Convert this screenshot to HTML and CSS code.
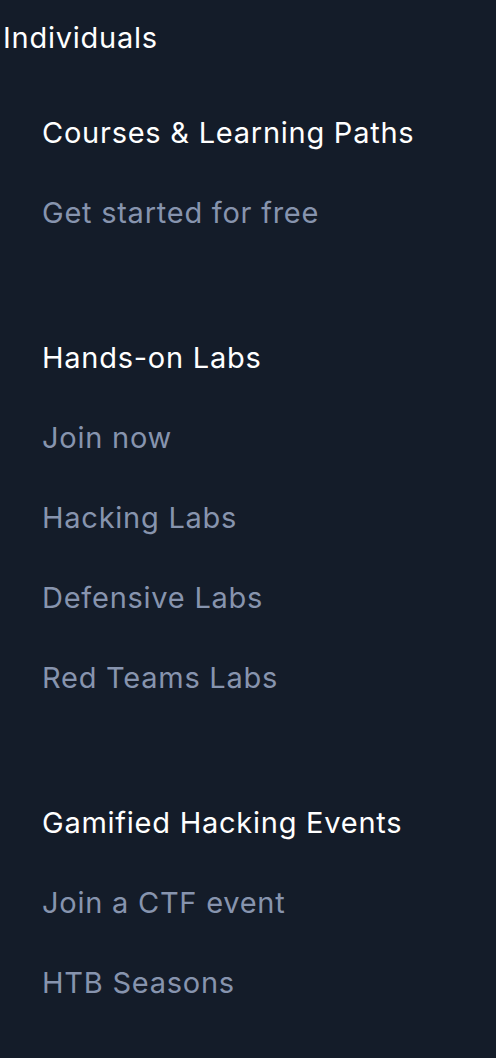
FILE: index.html
```html
<!DOCTYPE html>
<html lang="en">
<head>
<meta charset="utf-8">
<title>Individuals</title>
<link rel="stylesheet" href="styles.css">
</head>
<body>
<nav class="menu">
  <div class="menu-title">Individuals</div>
  <section class="group">
    <div class="group-title">Courses &amp; Learning Paths</div>
    <a class="link" href="#">Get started for free</a>
  </section>
  <section class="group">
    <div class="group-title">Hands-on Labs</div>
    <a class="link" href="#">Join now</a>
    <a class="link" href="#">Hacking Labs</a>
    <a class="link" href="#">Defensive Labs</a>
    <a class="link" href="#">Red Teams Labs</a>
  </section>
  <section class="group">
    <div class="group-title">Gamified Hacking Events</div>
    <a class="link" href="#">Join a CTF event</a>
    <a class="link" href="#">HTB Seasons</a>
  </section>
</nav>
</body>
</html>
```

FILE: styles.css
```css
html, body {
  margin: 0;
  padding: 0;
  background: #141c29;
}
body {
  font-family: Inter, "Liberation Sans", Arial, sans-serif;
  font-size: 29px;
  letter-spacing: 0.75px;
  min-height: 1058px;
}
.menu {
  display: flex;
  flex-direction: column;
  gap: 65px;
  padding-top: 18px;
}
.menu-title {
  color: #ffffff;
  line-height: 40px;
  padding-left: 3px;
  margin-bottom: -30px;
}
.group {
  display: flex;
  flex-direction: column;
  padding-left: 42px;
}
.group-title {
  color: #ffffff;
  line-height: 80px;
}
.link {
  color: #8794ae;
  text-decoration: none;
  line-height: 80px;
}
```
